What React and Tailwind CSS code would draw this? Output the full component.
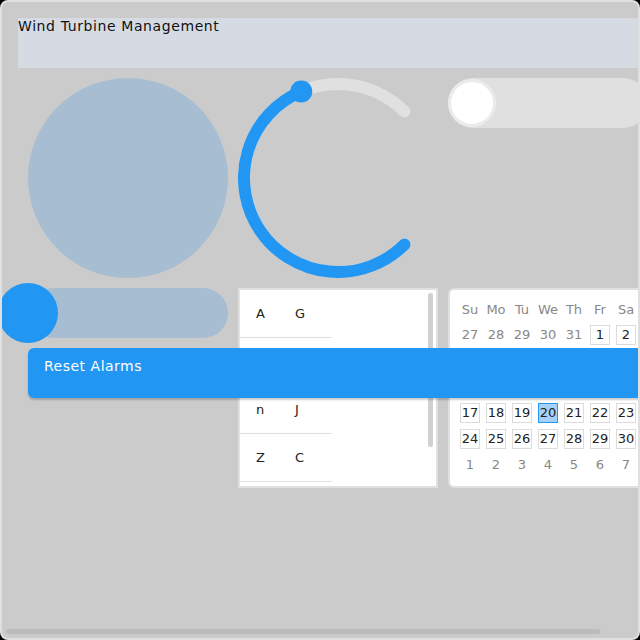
import React from "react"

const font = { fontFamily: '"DejaVu Sans", "Noto Sans", sans-serif' }

const weeks = [
  [27, 28, 29, 30, 31, 1, 2],
  [3, 4, 5, 6, 7, 8, 9],
  [10, 11, 12, 13, 14, 15, 16],
  [17, 18, 19, 20, 21, 22, 23],
  [24, 25, 26, 27, 28, 29, 30],
  [1, 2, 3, 4, 5, 6, 7],
]

function Knob() {
  return (
    <svg width="200" height="200" viewBox="0 0 200 200" className="shrink-0">
      <path d="M166.47 166.47 A94 94 0 1 1 166.47 33.53" fill="none" stroke="#e0e0e0" strokeWidth="12" strokeLinecap="round" />
      <path d="M166.47 166.47 A94 94 0 1 1 63.27 13.47" fill="none" stroke="#2196f3" strokeWidth="12" strokeLinecap="round" />
      <circle cx="63.27" cy="13.47" r="11" fill="#2196f3" />
    </svg>
  )
}

function Listbox() {
  const rows = [["A", "G"], ["k", "T"], ["n", "J"], ["Z", "C"]]
  return (
    <div className="relative h-[200px] w-[200px] shrink-0 border-2 border-[#e0e0e0] bg-white">
      <div className="w-[92px]">
        {rows.map((r, i) => (
          <div key={i} className="flex h-[48px] items-center border-b border-[#e0e0e0] text-[13px] text-[#222]">
            <span className="w-[39px] pl-4">{r[0]}</span>
            <span className="pl-4">{r[1]}</span>
          </div>
        ))}
      </div>
      <div className="absolute right-[3px] top-[3px] h-[154px] w-[5px] rounded-full bg-[#d0d0d0]" />
    </div>
  )
}

function Calendar() {
  return (
    <div className="h-[200px] w-[200px] shrink-0 rounded-md border-2 border-[#e0e0e0] bg-white pl-[7px] pt-[7px] text-[13px]">
      <div className="grid grid-cols-[repeat(7,26px)]">
        {["Su", "Mo", "Tu", "We", "Th", "Fr", "Sa"].map((d) => (
          <div key={d} className="flex h-[25px] items-center justify-center text-[#888]">{d}</div>
        ))}
        {weeks.map((w, wi) =>
          w.map((d, di) => {
            const muted = (wi === 0 && d > 20) || wi === 5
            const selected = wi === 3 && d === 20
            return (
              <div key={wi + "-" + di} className="flex h-[26px] items-center justify-center">
                {muted ? (
                  <span className="text-[#888]">{d}</span>
                ) : (
                  <span
                    className={
                      selected
                        ? "flex h-[20px] w-[20px] items-center justify-center border border-[#2196f3] bg-[#a6d0f5] text-[#222]"
                        : "flex h-[20px] w-[20px] items-center justify-center border border-[#dcdcdc] text-[#222]"
                    }
                  >
                    {d}
                  </span>
                )}
              </div>
            )
          })
        )}
      </div>
    </div>
  )
}

export default function App() {
  return (
    <div className="h-[640px] w-[640px] bg-black" style={font}>
      <div className="relative h-full w-full overflow-hidden rounded-lg border-2 border-[#e0e0e0] bg-[#cbcbcb] p-4">
        <div className="h-[50px] w-[700px] bg-[#d6dbe3] text-[14px] leading-4 tracking-[0.6px] text-[#111]">Wind Turbine Management</div>

        <div className="mt-[10px] flex gap-[10px] pl-[10px]">
          <div className="h-[200px] w-[200px] shrink-0 rounded-full bg-[#a7bdd1]" />
          <Knob />
          <div className="relative h-[50px] w-[200px] shrink-0 rounded-full bg-[#e0e0e0]">
            <div className="absolute left-0 top-[1px] h-[48px] w-[48px] rounded-full border-[3px] border-[#ebebeb] bg-white" />
          </div>
        </div>

        <div className="mt-[10px] flex gap-[10px] pl-[10px]">
          <div className="relative h-[50px] w-[200px] shrink-0 rounded-full bg-[#a7bdd1]">
            <div className="absolute left-[-30px] top-[-5px] h-[60px] w-[60px] rounded-full bg-[#2196f3]" />
          </div>
          <Listbox />
          <Calendar />
        </div>

        <div className="absolute left-[26px] top-[346px] h-[50px] w-[700px] rounded-md bg-[#2196f3] px-4 pt-[10px] text-[14px] leading-4 tracking-[0.5px] text-white shadow-[0_2px_2px_rgba(0,0,0,0.2)]">
          Reset Alarms
        </div>

        <div className="absolute bottom-[4px] left-[4px] h-[5px] w-[594px] rounded-full bg-[#bbbbbb]" />
      </div>
    </div>
  )
}
